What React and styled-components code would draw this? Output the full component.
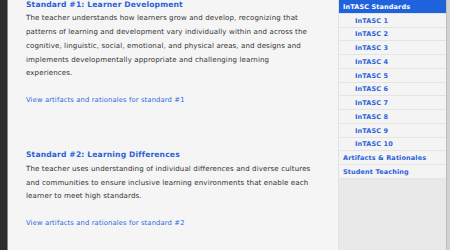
import React from "react";
import styled, { createGlobalStyle } from "styled-components";

const GlobalStyle = createGlobalStyle`
  html, body {
    margin: 0;
    padding: 0;
    background: #f5f5f5;
  }
  body {
    width: 450px;
    height: 250px;
    overflow: hidden;
    font-family: "DejaVu Sans", "Liberation Sans", sans-serif;
  }
`;

const Page = styled.div`
  display: flex;
  width: 450px;
  height: 250px;
  overflow: hidden;
`;
const LeftEdge = styled.div`
  width: 7px;
  flex: none;
  background: #2d2d2d;
  border-right: 1px solid #8a8a8a;
`;
const Main = styled.main`
  flex: 1;
  padding: 0 0 0 18px;
  margin-top: -2.3px;
  background: #f5f5f5;
`;
const Section = styled.section`
  margin-bottom: 41px;
`;
const Heading = styled.h2`
  margin: 0;
  font-size: 7.6px;
  font-weight: bold;
  line-height: 13.7px;
  color: #2a62d8;
  letter-spacing: 0.15px;
`;
const Text = styled.p`
  margin: 0;
  width: 287px;
  font-size: 7.05px;
  line-height: 13.7px;
  color: #333;
  letter-spacing: 0.12px;
`;
const MoreLink = styled.a`
  display: block;
  margin-top: 13.6px;
  font-size: 6.8px;
  line-height: 13.7px;
  color: #2f6ae0;
  text-decoration: none;
  letter-spacing: 0.12px;
`;
const Sidebar = styled.nav`
  width: 107px;
  flex: none;
  background: #e9e9e9;
  border-left: 1px solid #e2e2e2;
`;
const NavList = styled.ul`
  list-style: none;
  margin: 0;
  padding: 0;
`;
const NavItem = styled.li`
  height: 13.75px;
  box-sizing: border-box;
  border-bottom: 1px solid #e4e4e4;
  padding: 0.8px 0 0 ${(p) => (p.$sub ? 16 : 4)}px;
  background: ${(p) => (p.$active ? "#1f63dc" : "#f4f4f4")};
  color: ${(p) => (p.$active ? "#fff" : "#2b63d8")};
  font-size: 6.5px;
  font-weight: bold;
  line-height: 12px;
  white-space: nowrap;
  letter-spacing: 0.12px;
`;
const RightEdge = styled.div`
  width: 3px;
  flex: none;
  background: #d2d2d2;
  border-left: 1px solid #bdbdbd;
`;

const standards = [
  {
    n: 1,
    title: "Learner Development",
    text:
      "The teacher understands how learners grow and develop, recognizing that patterns of learning and development vary individually within and across the cognitive, linguistic, social, emotional, and physical areas, and designs and implements developmentally appropriate and challenging learning experiences.",
  },
  {
    n: 2,
    title: "Learning Differences",
    text:
      "The teacher uses understanding of individual differences and diverse cultures and communities to ensure inclusive learning environments that enable each learner to meet high standards.",
  },
];

export default function App() {
  return (
    <Page>
      <GlobalStyle />
      <LeftEdge />
      <Main>
        {standards.map((s) => (
          <Section key={s.n}>
            <Heading>
              Standard #{s.n}: {s.title}
            </Heading>
            <Text>{s.text}</Text>
            <MoreLink href="#">View artifacts and rationales for standard #{s.n}</MoreLink>
          </Section>
        ))}
      </Main>
      <Sidebar>
        <NavList>
          <NavItem $active>InTASC Standards</NavItem>
          {Array.from({ length: 10 }, (_, i) => (
            <NavItem key={i} $sub>
              InTASC {i + 1}
            </NavItem>
          ))}
          <NavItem>Artifacts &amp; Rationales</NavItem>
          <NavItem>Student Teaching</NavItem>
        </NavList>
      </Sidebar>
      <RightEdge />
    </Page>
  );
}
